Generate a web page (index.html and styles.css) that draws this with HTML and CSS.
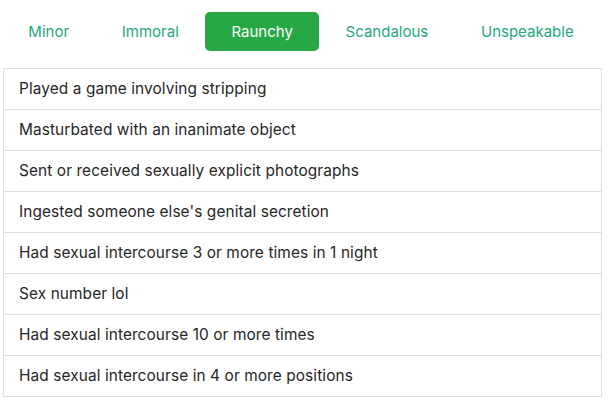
FILE: index.html
```html
<!DOCTYPE html>
<html lang="en">
<head>
  <meta charset="UTF-8" />
  <meta name="viewport" content="width=device-width, initial-scale=1.0" />
  <title>Purity test</title>
  <link rel="stylesheet" href="styles.css">
</head>
<body>
  <main class="page">
    <nav class="tabs">
      <a class="tab" href="#">Minor</a>
      <a class="tab" href="#">Immoral</a>
      <a class="tab active" href="#">Raunchy</a>
      <a class="tab" href="#">Scandalous</a>
      <a class="tab" href="#">Unspeakable</a>
    </nav>
    <ul class="list">
      <li class="item">Played a game involving stripping</li>
      <li class="item">Masturbated with an inanimate object</li>
      <li class="item">Sent or received sexually explicit photographs</li>
      <li class="item">Ingested someone else's genital secretion</li>
      <li class="item">Had sexual intercourse 3 or more times in 1 night</li>
      <li class="item">Sex number lol</li>
      <li class="item">Had sexual intercourse 10 or more times</li>
      <li class="item">Had sexual intercourse in 4 or more positions</li>
    </ul>
  </main>
</body>
</html>
```

FILE: styles.css
```css
* {
  box-sizing: border-box;
  margin: 0;
  padding: 0;
}
:root {
  --green: #28a745;
  --link: #1fa97a;
  --text: #262626;
  --line: #dedede;
}
body {
  background: #fff;
  color: var(--text);
  font: 15px/1.4 Inter, "Noto Sans", sans-serif;
}
.page {
  padding: 12px 8px 0 0;
}
.tabs {
  display: flex;
  padding-left: 2px;
  padding-right: 2px;
}
.tab {
  flex: 1 1 auto;
  border-radius: 5px;
  color: var(--link);
  padding: 9px 10px;
  text-align: center;
  text-decoration: none;
  line-height: 21px;
}
.tab.active {
  background-color: var(--green);
  color: #fff;
}
.list {
  border: 1px solid var(--line);
  list-style: none;
  margin: 17px 0 0 3px;
}
.item {
  border-top: 1px solid var(--line);
  height: 41px;
  padding: 0 15px 1px;
  display: flex;
  align-items: center;
  font-size: 15.4px;
  letter-spacing: 0.1px;
}
.item:first-child {
  border-top: 0;
  height: 40px;
}
```
